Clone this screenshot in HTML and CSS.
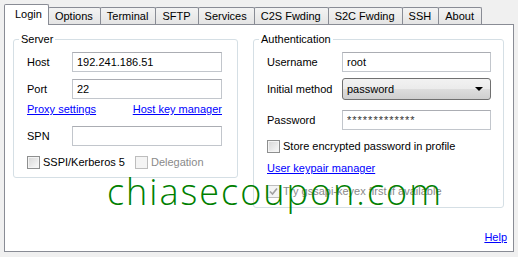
FILE: index.html
```html
<!DOCTYPE html>
<html lang="en">
<head>
    <meta charset="UTF-8">
    <meta name="viewport" content="width=device-width, initial-scale=1.0">
    <title>Login</title>
    <link rel="stylesheet" href="styles.css">
</head>
<body>
    <div class="tabs">
        <div class="tab active">Login</div>
        <div class="tab">Options</div>
        <div class="tab">Terminal</div>
        <div class="tab">SFTP</div>
        <div class="tab">Services</div>
        <div class="tab">C2S Fwding</div>
        <div class="tab">S2C Fwding</div>
        <div class="tab">SSH</div>
        <div class="tab">About</div>
    </div>

    <div class="panel">
        <div class="groups">
            <fieldset class="group server">
                <legend>Server</legend>
                <div class="row first">
                    <label class="lbl">Host</label>
                    <input class="field" type="text" value="192.241.186.51">
                </div>
                <div class="row gap7">
                    <label class="lbl">Port</label>
                    <input class="field" type="text" value="22">
                </div>
                <div class="links">
                    <a href="#">Proxy settings</a>
                    <a href="#">Host key manager</a>
                </div>
                <div class="row gap10">
                    <label class="lbl">SPN</label>
                    <input class="field" type="text" value="">
                </div>
                <div class="checks gap10">
                    <span class="check"><span class="box"></span>SSPI/Kerberos 5</span>
                    <span class="check disabled deleg"><span class="box"></span>Delegation</span>
                </div>
            </fieldset>

            <fieldset class="group auth">
                <legend>Authentication</legend>
                <div class="row first">
                    <label class="lbl">Username</label>
                    <input class="field" type="text" value="root">
                </div>
                <div class="row gap6">
                    <label class="lbl">Initial method</label>
                    <div class="select">password<span class="arrow"></span></div>
                </div>
                <div class="row gap10">
                    <label class="lbl">Password</label>
                    <input class="field pass" type="text" value="*************">
                </div>
                <div class="checks gap10">
                    <span class="check"><span class="box"></span>Store encrypted password in profile</span>
                </div>
                <div class="links single">
                    <a href="#">User keypair manager</a>
                </div>
                <div class="checks gap10">
                    <span class="check disabled">
                        <span class="box">
                            <svg width="9" height="9" viewBox="0 0 9 9"><path d="M1 4.5 L3.5 7 L8 1.5" fill="none" stroke="#a0a0a0" stroke-width="1.6"/></svg>
                        </span>Try gssapi-keyex first if available
                    </span>
                </div>
            </fieldset>
        </div>

        <a class="help" href="#">Help</a>
    </div>

    <div class="watermark">chiasecoupon.com</div>
</body>
</html>
```

FILE: styles.css
```css
body {
    margin: 0;
    width: 518px;
    height: 257px;
    background-color: #f0f0f0;
    font-family: 'Liberation Sans', Arial, sans-serif;
    font-size: 11px;
    line-height: 13px;
    color: #000;
    position: relative;
    overflow: hidden;
}
.tabs {
    display: flex;
    align-items: flex-end;
    height: 24px;
    padding-left: 4px;
}
.tab {
    height: 16px;
    line-height: 16px;
    padding: 0 7px 0 6px;
    margin-left: -1px;
    border: 1px solid #898c95;
    border-bottom: none;
    border-radius: 2px 2px 0 0;
    background: linear-gradient(#f3f3f3, #e4e4e4);
    white-space: nowrap;
}
.tab.active {
    height: 20px;
    line-height: 19px;
    margin-left: 0;
    margin-bottom: -1px;
    padding: 0 6px 0 10px;
    background: #fff;
    position: relative;
    z-index: 1;
}
.panel {
    margin: 0 4px 0 4px;
    border: 1px solid #898c95;
    background: #fff;
    padding: 8px 6px 7px 8px;
    box-sizing: border-box;
    height: 228px;
    display: flex;
    flex-direction: column;
}
.groups {
    display: flex;
    align-items: flex-start;
    gap: 15px;
}
.group {
    margin: 0;
    padding: 0 0 8px 13px;
    border: 1px solid #d5dfe5;
    border-radius: 3px;
    min-width: 0;
}
.group legend {
    margin-left: -8px;
    padding: 0 2px;
    line-height: 13px;
}
.server {
    width: 210px;
}
.auth {
    width: 236px;
    padding-bottom: 9px;
}
.row {
    display: flex;
    align-items: center;
}
.row.first {
    margin-top: 6px;
}
.gap6 {
    margin-top: 6px;
}
.gap7 {
    margin-top: 7px;
}
.gap10 {
    margin-top: 10px;
}
.server .lbl {
    width: 45px;
}
.auth .lbl {
    width: 75px;
}
.field {
    width: 150px;
    height: 20px;
    box-sizing: border-box;
    margin: 0;
    padding: 0 4px;
    border: 1px solid #c2c6cc;
    border-top-color: #abadb3;
    font-family: inherit;
    font-size: 11px;
    color: #000;
    outline: none;
}
.auth .field {
    width: 149px;
}
.field.pass {
    letter-spacing: 1px;
    color: #333;
}
.select {
    width: 149px;
    height: 22px;
    box-sizing: border-box;
    padding: 0 4px;
    line-height: 20px;
    border: 1px solid #707070;
    border-radius: 3px;
    background: linear-gradient(#f2f2f2 0%, #ebebeb 50%, #dddddd 51%, #cfcfcf 100%);
    display: flex;
    align-items: center;
    justify-content: space-between;
}
.arrow {
    width: 0;
    height: 0;
    margin-right: 3px;
    border-left: 4px solid transparent;
    border-right: 4px solid transparent;
    border-top: 4px solid #000;
}
a {
    color: #0000ff;
    text-decoration: underline;
}
.links {
    display: flex;
    justify-content: space-between;
    width: 195px;
    margin-top: 4px;
}
.links.single {
    margin-top: 9px;
}
.checks {
    display: flex;
    align-items: center;
    height: 13px;
}
.check {
    display: flex;
    align-items: center;
    gap: 3px;
    white-space: nowrap;
}
.box {
    width: 13px;
    height: 13px;
    box-sizing: border-box;
    border: 1px solid #8e8f8f;
    background: linear-gradient(135deg, #d6d6d6, #fafafa);
    box-shadow: inset 0 0 0 1px #f4f4f4;
    display: flex;
    align-items: center;
    justify-content: center;
}
.check.disabled {
    color: #8a8a8a;
}
.check.disabled .box {
    border-color: #bdbdbd;
    background: #f4f4f4;
}
.deleg {
    margin-left: 10px;
}
.help {
    margin-top: auto;
    align-self: flex-end;
}
.watermark {
    position: absolute;
    left: 107px;
    top: 174px;
    font-family: 'Open Sans', sans-serif;
    font-weight: 300;
    font-size: 36px;
    line-height: 36px;
    letter-spacing: 2px;
    color: #008000;
    white-space: nowrap;
}
```
